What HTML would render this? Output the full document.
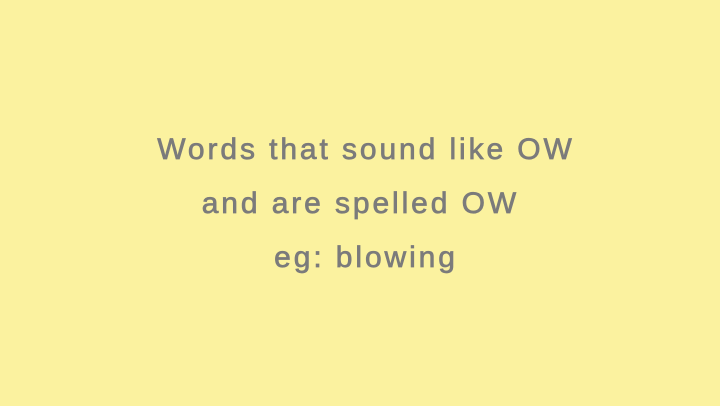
<!DOCTYPE html>
<html><head><style>
html,body{margin:0;padding:0;}
body{width:720px;height:406px;background:#fbf29f;overflow:hidden;position:relative;font-family:"Liberation Sans",sans-serif;color:#7b7b7b;}
.l{position:absolute;left:6px;width:720px;text-align:center;font-size:30px;letter-spacing:2.9px;line-height:40px;-webkit-text-stroke:0.7px #7b7b7b;}
</style></head><body>
<div class="l" style="top:130px">Words that sound like OW</div>
<div class="l" style="top:184px">and are spelled OW&nbsp;</div>
<div class="l" style="top:238px">eg: blowing</div>
</body></html>
